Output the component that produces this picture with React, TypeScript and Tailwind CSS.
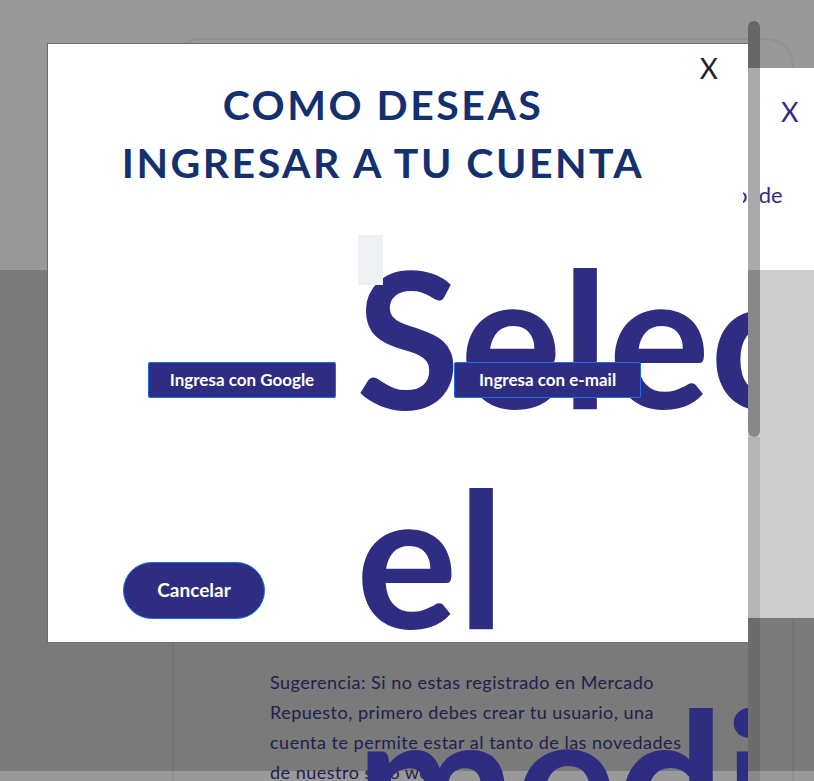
export default function App() {
  return (
    <div className="relative flex h-[781px] w-full flex-col overflow-hidden bg-[#999999] font-[Lato,sans-serif]">
      {/* page behind the overlay */}
      <div className="h-[270px] shrink-0" />
      <div className="h-[501px] shrink-0 bg-[#7a7a7a]" />
      <div className="flex-1" />
      <div className="absolute left-[172px] top-[38px] h-[800px] w-[622px] rounded-[28px] border-2 border-black/5" />
      <div className="absolute left-[270px] top-[667px] flex flex-col text-[18px] leading-[30px] tracking-[0.5px] text-[#21214d]">
        <span className="whitespace-nowrap">Sugerencia: Si no estas registrado en Mercado</span>
        <span className="whitespace-nowrap">Repuesto, primero debes crear tu usuario, una</span>
        <span className="whitespace-nowrap">cuenta te permite estar al tanto de las novedades</span>
        <span className="whitespace-nowrap">de nuestro sitio web.</span>
      </div>

      {/* second modal, peeking on the right */}
      <div className="absolute left-[748px] top-[68px] flex w-[66px] flex-col">
        <div className="flex h-[202px] flex-col bg-white pl-[33px] pt-[24px]">
          <span className="text-[27px] text-[#2e2d82]">X</span>
        </div>
        <div className="h-[348px] bg-[#cccccc]" />
      </div>
      <div className="absolute left-[743px] top-[181px] z-30 w-[71px] overflow-hidden">
        <div className="-ml-[8px] whitespace-nowrap text-[22px] leading-[28px] text-[#2e2d82]">o &nbsp;de</div>
      </div>

      {/* main modal */}
      <div className="absolute left-[47px] top-[43px] flex h-[600px] w-[701px] flex-col border border-r-0 border-[#6e6e6e] bg-white">
        <button className="absolute right-[30px] top-[3px] text-[28px] text-[#222222]">X</button>
        <h2 className="mt-[32px] pr-[30px] text-center text-[41px] font-bold leading-[58px] tracking-[2.5px] text-[#14306f]">
          COMO DESEAS
          <br />
          INGRESAR A TU CUENTA
        </h2>

        <div className="relative z-20 mt-[170px] flex gap-[118px] pl-[100px]">
          <button className="h-[36px] w-[188px] rounded-[2px] border border-[#1b6ee8] bg-[#2e2d82] text-[17px] font-bold text-white">
            Ingresa con Google
          </button>
          <button className="h-[36px] w-[187px] rounded-[2px] border border-[#1b6ee8] bg-[#2e2d82] text-[17px] font-bold text-white">
            Ingresa con e-mail
          </button>
        </div>

        <div className="relative z-20 mt-[164px] flex pl-[75px]">
          <button className="h-[57px] w-[142px] rounded-full border border-[#1b6ee8] bg-[#2e2d82] text-[19px] font-bold text-white">
            Cancelar
          </button>
        </div>

        {/* oversized heading that spills out of the dialog */}
        <div className="absolute left-[310px] top-[181px] z-10 h-[560px] w-[391px] overflow-hidden">
          <div className="absolute left-0 top-[10px] h-[50px] w-[25px] bg-[#eff0f4]" />
          <div className="-ml-[2px] text-[190px] font-bold leading-[220px] text-[#2e2d82]">
            Seleccione
            <br />
            el
            <br />
            medio
          </div>
        </div>
      </div>

      {/* scrollbar */}
      <div className="absolute left-[748px] top-[21px] z-40 flex h-[760px] w-[12px] flex-col">
        <div className="flex h-[416px] shrink-0 flex-col overflow-hidden rounded-full">
          <div className="h-[47px] bg-[#666666]" />
          <div className="h-[202px] bg-[#aaaaaa]" />
          <div className="flex-1 bg-[#888888]" />
        </div>
        <div className="h-[181px] shrink-0 bg-[#b4b4b4]" />
        <div className="h-[153px] shrink-0 bg-[#6c6c6c]" />
        <div className="flex-1 bg-[#888888]" />
      </div>
    </div>
  );
}
